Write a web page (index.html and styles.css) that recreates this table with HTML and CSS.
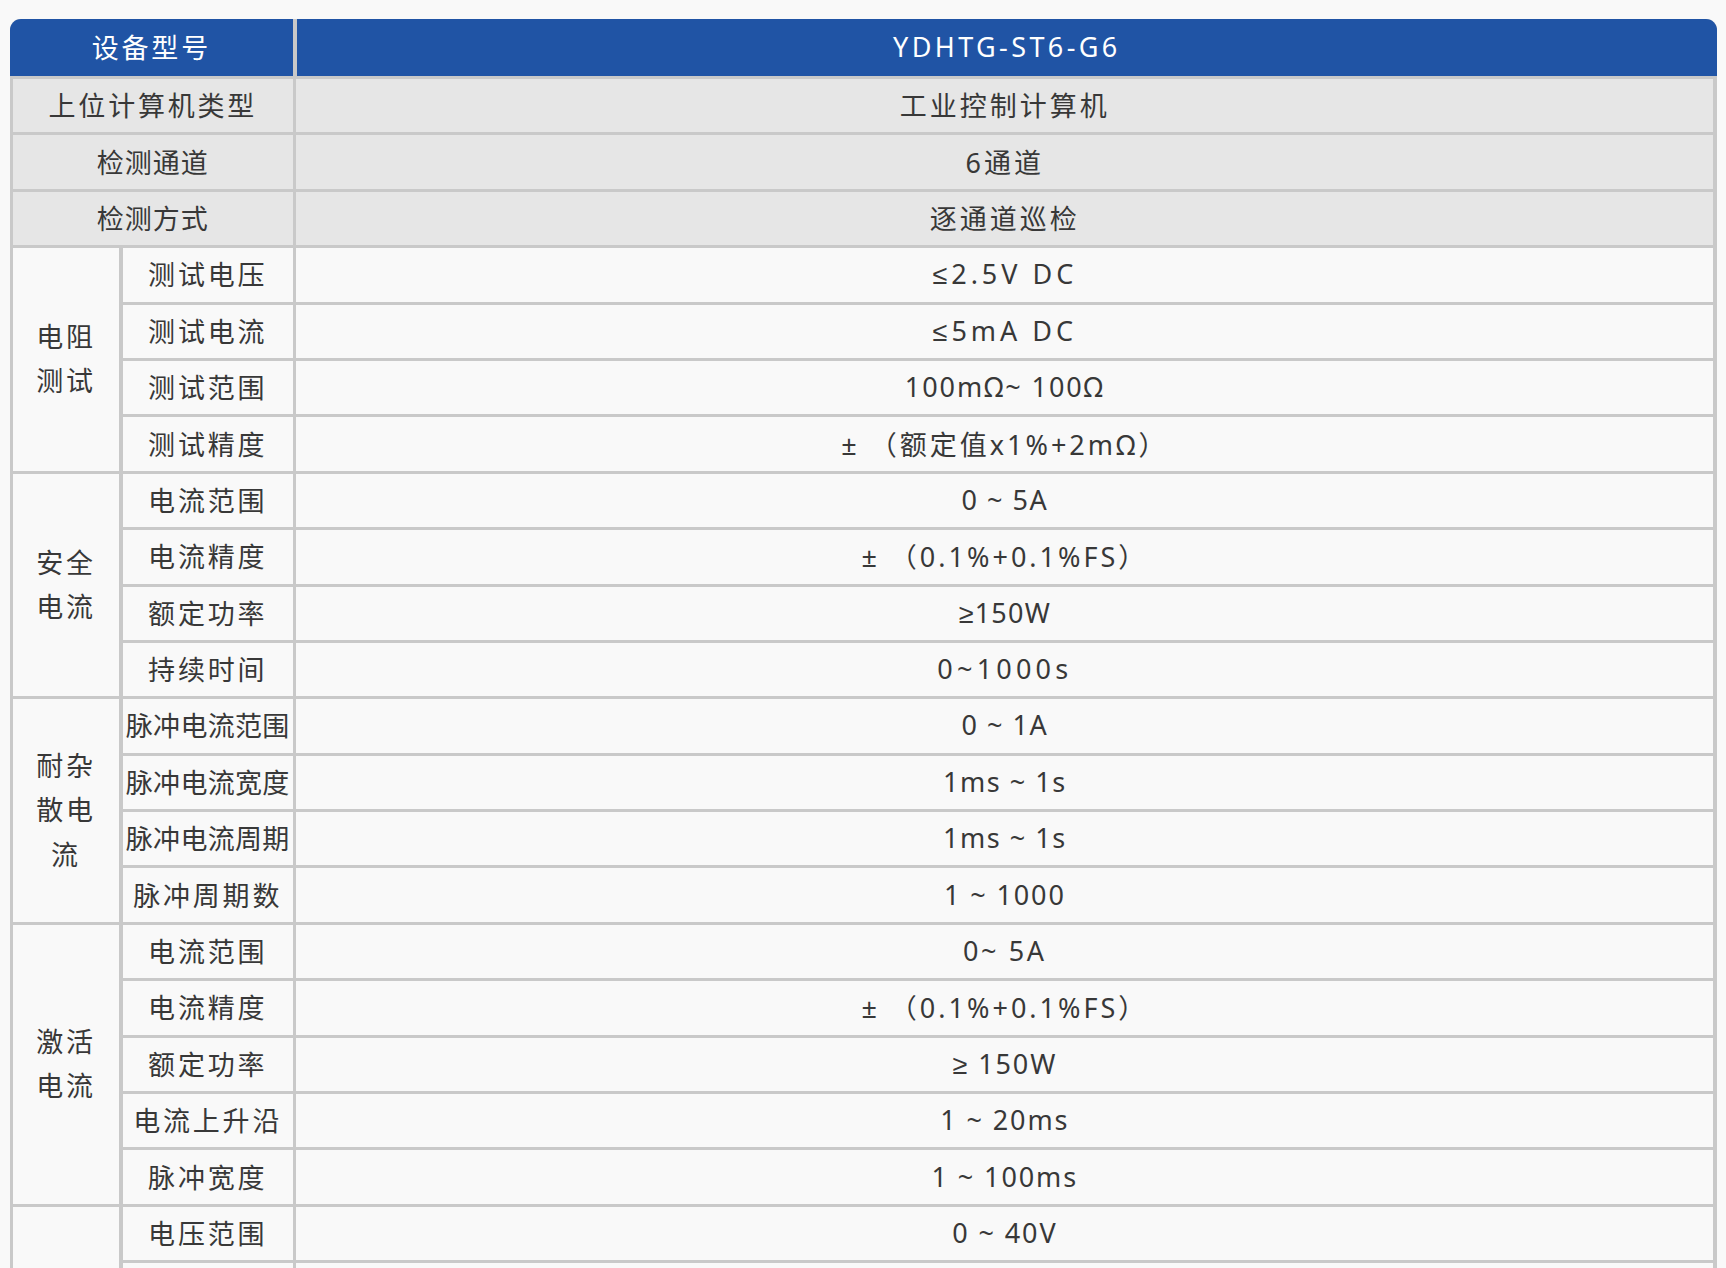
FILE: index.html
```html
<!DOCTYPE html>
<html lang="zh-CN">
<head>
<meta charset="utf-8">
<title>设备参数</title>
<link rel="stylesheet" href="styles.css">
</head>
<body>
<div class="spec">
  <div class="spec-head">
    <div class="hcell">设备型号</div>
    <div class="hcell hval">YDHTG-ST6-G6</div>
  </div>
  <div class="spec-body">
    <div class="cell grey span2">上位计算机类型</div>
    <div class="cell grey val v-cjk">工业控制计算机</div>
    <div class="cell grey span2 snug">检测通道</div>
    <div class="cell grey val v-cjk">6通道</div>
    <div class="cell grey span2 snug">检测方式</div>
    <div class="cell grey val v-cjk">逐通道巡检</div>

    <div class="cell group rows4">电阻<br>测试</div>
    <div class="cell">测试电压</div>
    <div class="cell val v-wide">≤2.5V DC</div>
    <div class="cell">测试电流</div>
    <div class="cell val v-wide">≤5mA DC</div>
    <div class="cell">测试范围</div>
    <div class="cell val">100mΩ~ 100Ω</div>
    <div class="cell">测试精度</div>
    <div class="cell val v-cjk">± （额定值x1%+2mΩ）</div>

    <div class="cell group rows4">安全<br>电流</div>
    <div class="cell">电流范围</div>
    <div class="cell val v-narrow">0 ~ 5A</div>
    <div class="cell">电流精度</div>
    <div class="cell val v-cjk">± （0.1%+0.1%FS）</div>
    <div class="cell">额定功率</div>
    <div class="cell val v-tight">≥150W</div>
    <div class="cell">持续时间</div>
    <div class="cell val v-loose">0~1000s</div>

    <div class="cell group rows4">耐杂<br>散电<br>流</div>
    <div class="cell tight">脉冲电流范围</div>
    <div class="cell val v-narrow">0 ~ 1A</div>
    <div class="cell tight">脉冲电流宽度</div>
    <div class="cell val v-narrow">1ms ~ 1s</div>
    <div class="cell tight">脉冲电流周期</div>
    <div class="cell val v-narrow">1ms ~ 1s</div>
    <div class="cell">脉冲周期数</div>
    <div class="cell val">1 ~ 1000</div>

    <div class="cell group rows5">激活<br>电流</div>
    <div class="cell">电流范围</div>
    <div class="cell val v-mid">0~ 5A</div>
    <div class="cell">电流精度</div>
    <div class="cell val v-cjk">± （0.1%+0.1%FS）</div>
    <div class="cell">额定功率</div>
    <div class="cell val">≥ 150W</div>
    <div class="cell">电流上升沿</div>
    <div class="cell val">1 ~ 20ms</div>
    <div class="cell">脉冲宽度</div>
    <div class="cell val">1 ~ 100ms</div>

    <div class="cell group rows2"></div>
    <div class="cell">电压范围</div>
    <div class="cell val">0 ~ 40V</div>
    <div class="cell"></div>
    <div class="cell val"></div>
  </div>
</div>
</body>
</html>
```

FILE: styles.css
```css
html, body {
  margin: 0;
  padding: 0;
  background: #f9f9f9;
}

body {
  padding: 19px 0 0 10px;
  font-family: "Noto Sans", "Liberation Sans", "Noto Sans CJK SC", sans-serif;
  font-size: 27px;
  color: #383838;
  height: 1249px;
  overflow: hidden;
}

.spec {
  width: 1707px;
  background: #c9c9c9;
  border-radius: 11px 11px 0 0;
  overflow: hidden;
}

.spec-head {
  display: grid;
  grid-template-columns: 282.7px 1fr;
  column-gap: 4px;
  height: 57px;
}

.hcell {
  background: #2054a5;
  color: #ffffff;
  display: flex;
  align-items: center;
  justify-content: center;
  padding-bottom: 3px;
  letter-spacing: 2.8px;
}

.hval {
  letter-spacing: 3.4px;
}

.spec-body {
  display: grid;
  grid-template-columns: 106px 170px 1fr;
  grid-auto-rows: 53.4px;
  column-gap: 3.7px;
  row-gap: 3px;
  padding: 3px 3.7px 3px 3px;
}

.cell {
  background: #f9f9f9;
  display: flex;
  align-items: center;
  justify-content: center;
  text-align: center;
  padding-bottom: 2px;
  letter-spacing: 2.8px;
  white-space: nowrap;
}

.grey {
  background: #e6e6e6;
}

.span2 {
  grid-column: span 2;
}

.val { letter-spacing: 1.9px; }
.v-cjk { letter-spacing: 3px; }
.v-wide { letter-spacing: 4px; }
.v-loose { letter-spacing: 4.2px; }
.v-mid { letter-spacing: 2.6px; }
.v-narrow { letter-spacing: 1.5px; }
.v-tight { letter-spacing: 1.2px; }

.snug {
  letter-spacing: 1px;
}

.tight {
  letter-spacing: 0.3px;
}

.group {
  line-height: 44.5px;
  white-space: normal;
  padding-bottom: 0;
}

.rows2 { grid-row: span 2; }
.rows4 { grid-row: span 4; }
.rows5 { grid-row: span 5; }
```
